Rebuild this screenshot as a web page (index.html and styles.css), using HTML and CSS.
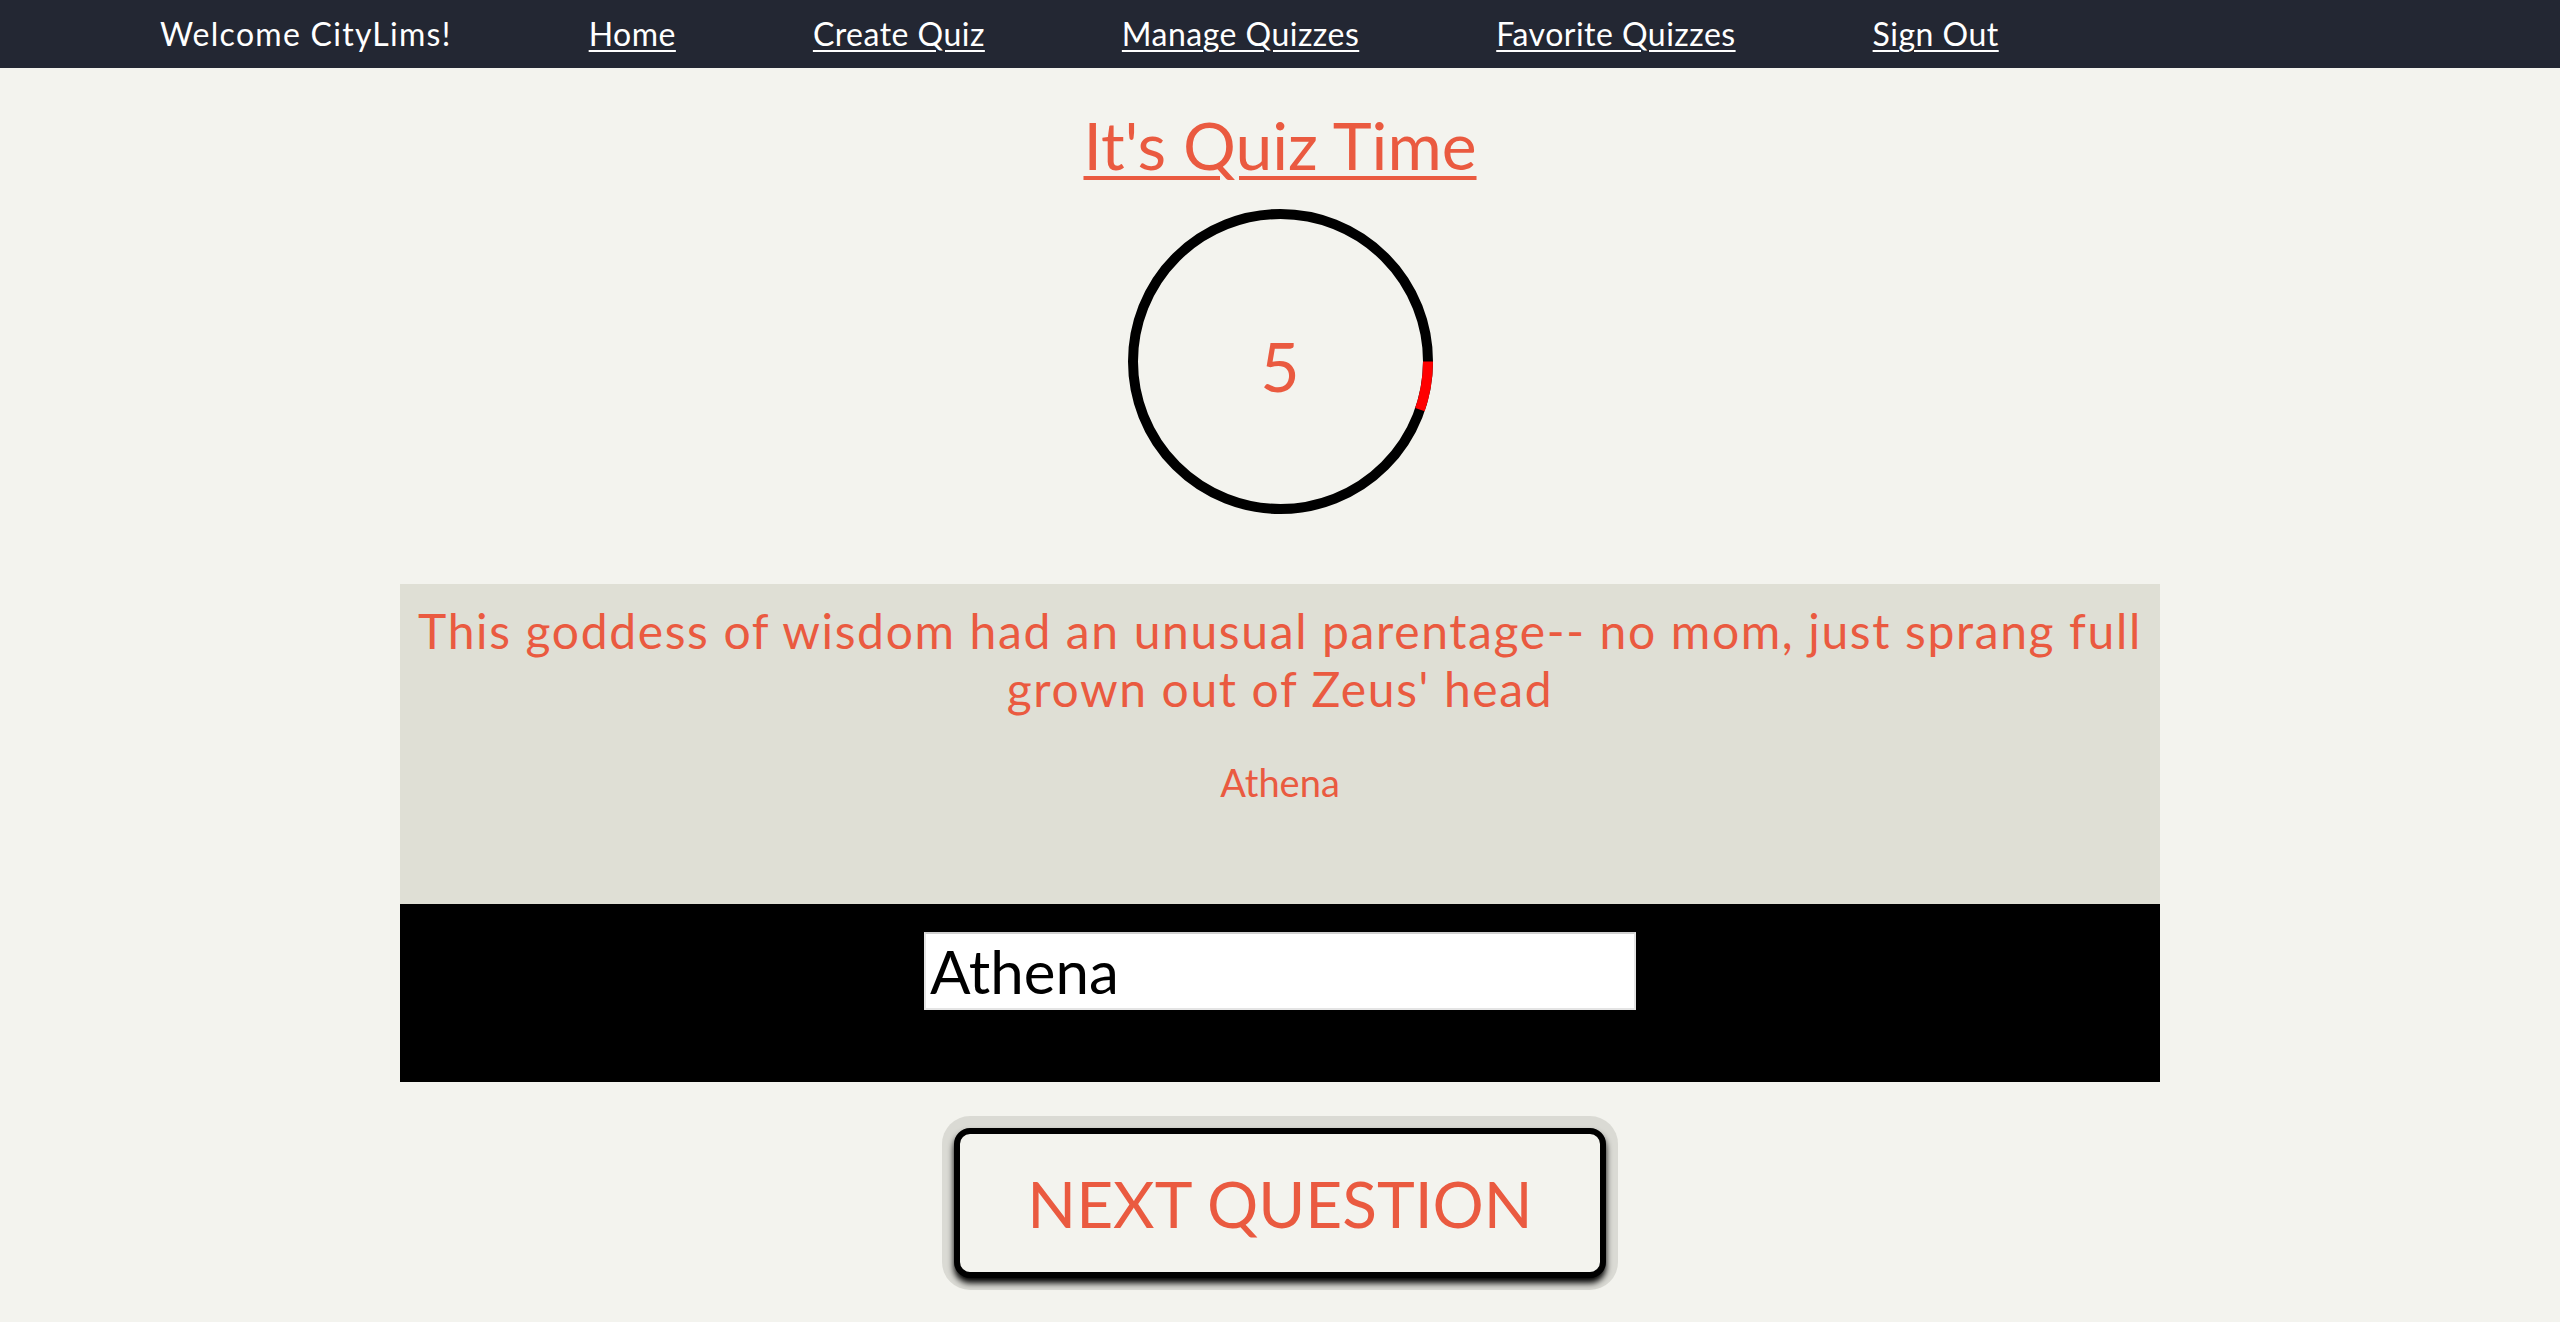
FILE: index.html
```html
<!DOCTYPE html>
<html lang="en">
<head>
<meta charset="utf-8">
<title>Quiz</title>
<link rel="stylesheet" href="styles.css">
</head>
<body>
<nav class="navbar">
  <span class="nav-welcome">Welcome CityLims!</span>
  <a class="nav-link" href="#">Home</a>
  <a class="nav-link" href="#">Create Quiz</a>
  <a class="nav-link" href="#">Manage Quizzes</a>
  <a class="nav-link" href="#">Favorite Quizzes</a>
  <a class="nav-link" href="#">Sign Out</a>
</nav>
<main class="page">
  <h1 class="title">It's Quiz Time</h1>
  <div class="timer">
    <svg class="timer-ring" width="305" height="305" viewBox="0 0 305 305">
      <circle cx="152.5" cy="152.5" r="147.5" fill="none" stroke="#000" stroke-width="10"/>
      <circle cx="152.5" cy="152.5" r="147.5" fill="none" stroke="#ff0000" stroke-width="10" stroke-dasharray="49 1000"/>
    </svg>
    <span class="timer-count">5</span>
  </div>
  <section class="question-card">
    <p class="question-text">This goddess of wisdom had an unusual parentage-- no mom, just sprang full grown out of Zeus' head</p>
    <p class="answer-text">Athena</p>
  </section>
  <section class="answer-bar">
    <input class="answer-input" type="text" value="Athena">
  </section>
  <button class="next-btn" type="button">NEXT QUESTION</button>
</main>
</body>
</html>
```

FILE: styles.css
```css
html, body {
  margin: 0;
  padding: 0;
}
body {
  background: #f3f3ee;
  font-family: "Lato", "Open Sans", sans-serif;
  color: #ea5a40;
  height: 1322px;
  overflow: hidden;
}
.navbar {
  height: 68px;
  background: #232733;
  display: flex;
  align-items: center;
  gap: 137px;
  padding-left: 160px;
  font-size: 32px;
  color: #ffffff;
}
.nav-welcome {
  color: #ffffff;
  padding-bottom: 2px;
  letter-spacing: 0.04em;
}
.nav-link {
  color: #ffffff;
  padding-bottom: 2px;
  letter-spacing: 0.015em;
  text-decoration: underline;
  text-underline-offset: 4px;
  text-decoration-thickness: 2px;
}
.page {
  display: flex;
  flex-direction: column;
  align-items: center;
}
.title {
  margin: 43px 0 0;
  font-size: 66px;
  line-height: 68px;
  font-weight: 400;
  color: #ea5a40;
  text-decoration: underline;
  text-decoration-thickness: 4px;
  text-underline-offset: 6px;
}
.timer {
  margin-top: 30px;
  width: 305px;
  height: 305px;
  position: relative;
  display: flex;
  align-items: center;
  justify-content: center;
}
.timer-ring {
  position: absolute;
  left: 0;
  top: 0;
}
.timer-count {
  font-size: 68px;
  line-height: 1;
  padding-top: 8px;
}
.question-card {
  margin-top: 70px;
  width: 1760px;
  height: 320px;
  box-sizing: border-box;
  background: #dfdfd5;
  padding: 18px 14px 0;
  text-align: center;
}
.question-text {
  margin: 0;
  font-size: 48px;
  line-height: 58px;
  letter-spacing: 0.034em;
}
.answer-text {
  margin: 41px 0 0;
  font-size: 38px;
  line-height: 46px;
}
.answer-bar {
  width: 1760px;
  height: 178px;
  box-sizing: border-box;
  background: #000000;
  display: flex;
  justify-content: center;
  align-items: flex-start;
  padding-top: 28px;
}
.answer-input {
  width: 712px;
  height: 78px;
  box-sizing: border-box;
  margin: 0;
  padding: 0 4px;
  border: 2px solid #e4e4e4;
  border-top-color: #cfcfcf;
  background: #ffffff;
  font-family: "Lato", "Open Sans", sans-serif;
  font-size: 60px;
  color: #000000;
  outline: none;
}
.next-btn {
  margin-top: 46px;
  width: 652px;
  height: 150px;
  box-sizing: border-box;
  border: 6px solid #000000;
  border-radius: 16px;
  background: #f3f3ee;
  box-shadow: 0 5px 6px #000000, 0 0 0 12px #dadad4;
  font-family: "Lato", "Open Sans", sans-serif;
  font-size: 64px;
  color: #ea5a40;
  padding: 0;
  cursor: pointer;
}
```
